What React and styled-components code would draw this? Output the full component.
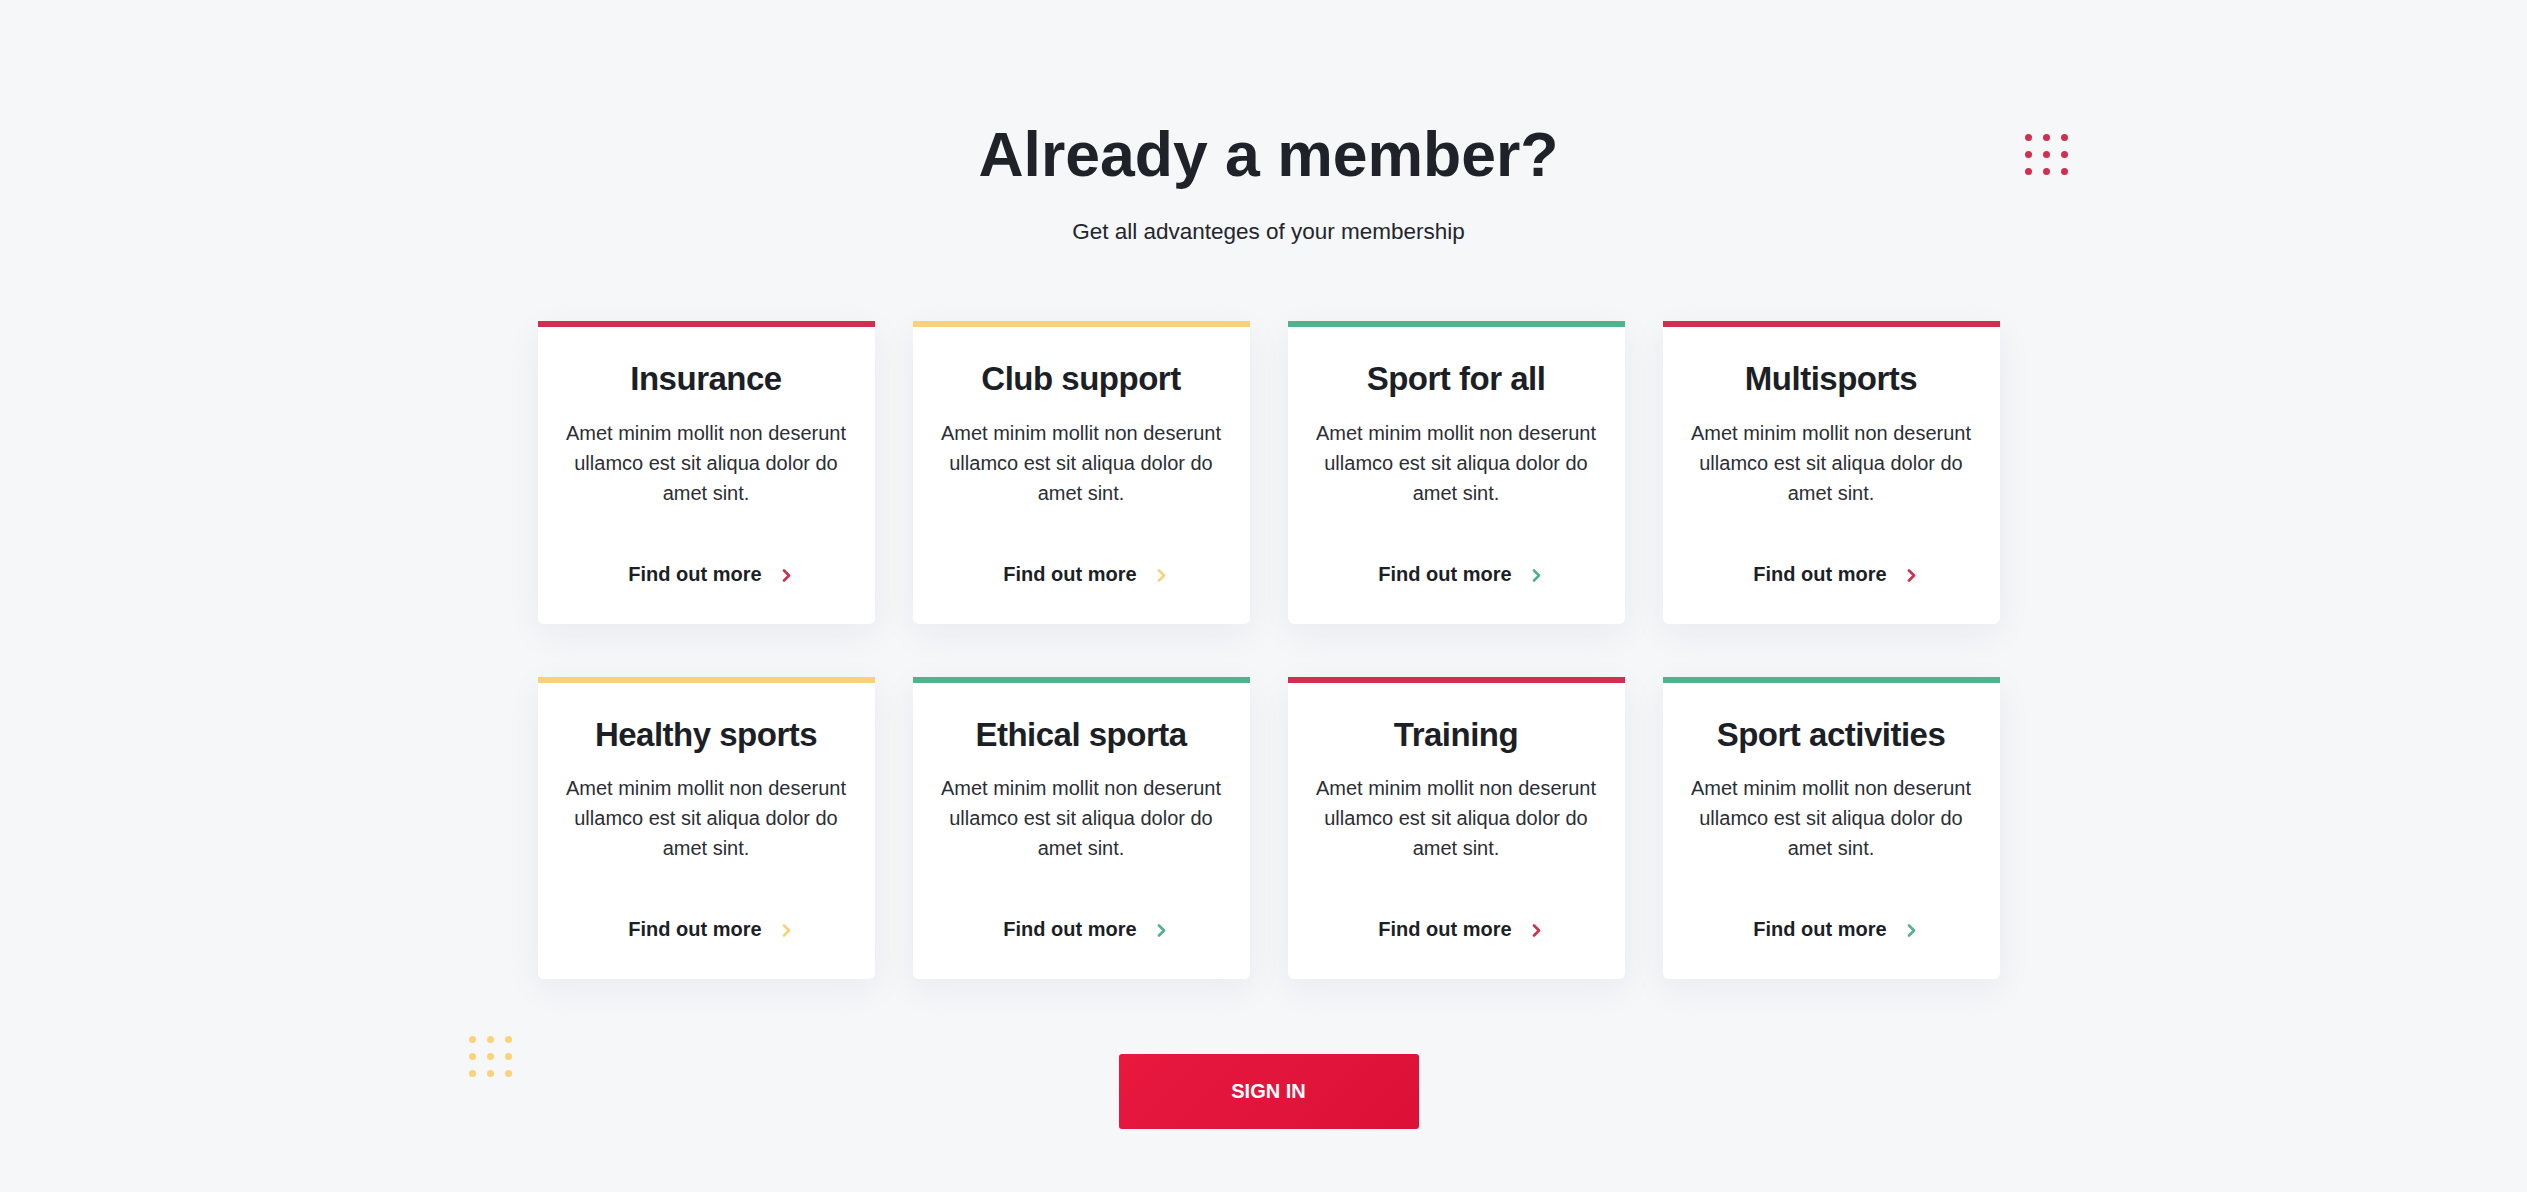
import React from 'react';
import styled, { createGlobalStyle } from 'styled-components';

const GlobalStyle = createGlobalStyle`
  html, body {
    margin: 0;
    padding: 0;
    background: #f6f7f9;
  }
  body {
    font-family: 'Liberation Sans', Arial, sans-serif;
    color: #1e2128;
  }
`;

const ACCENTS = {
  red: '#d02f4f',
  yellow: '#f7d27a',
  green: '#50b38e',
};

const Page = styled.main`
  position: relative;
  min-height: 1192px;
  box-sizing: border-box;
  padding: 117px 0 0 10px;
  display: flex;
  flex-direction: column;
  align-items: center;
  overflow: hidden;
`;

const Title = styled.h1`
  margin: 0;
  font-size: 62.5px;
  line-height: 1.2;
  font-weight: 700;
  color: #1f2229;
`;

const Subtitle = styled.p`
  margin: 27px 0 0;
  font-size: 22.5px;
  line-height: normal;
  color: #23262c;
`;

const Grid = styled.div`
  margin-top: 76px;
  display: grid;
  grid-template-columns: repeat(4, 337px);
  column-gap: 38px;
  row-gap: 53px;
`;

const Card = styled.article`
  background: #fff;
  border-top: 6px solid ${(p) => ACCENTS[p.$accent]};
  border-radius: 0 0 6px 6px;
  box-shadow: 0 10px 36px rgba(30, 40, 60, 0.06);
  padding: 32px 20px 38px;
  text-align: center;
  display: flex;
  flex-direction: column;
  align-items: center;
`;

const CardTitle = styled.h3`
  margin: 0;
  font-size: 33px;
  line-height: 1.2;
  font-weight: 700;
  letter-spacing: -0.5px;
  color: #1c1f26;
`;

const CardText = styled.p`
  margin: 19px 0 55px;
  font-size: 20px;
  line-height: 30px;
  color: #2b2e34;
`;

const MoreLink = styled.a`
  display: inline-flex;
  align-items: center;
  gap: 20px;
  margin-left: 7px;
  font-size: 20px;
  line-height: 23px;
  font-weight: 700;
  color: #1c1f26;
  text-decoration: none;
  cursor: pointer;

  svg {
    margin-top: 2px;
    color: ${(p) => ACCENTS[p.$accent]};
  }
`;

const SignIn = styled.button`
  margin-top: 75px;
  width: 300px;
  height: 75px;
  border: none;
  border-radius: 3px;
  background: linear-gradient(135deg, #e8183f 0%, #dc1138 100%);
  color: #fff;
  font-family: 'Liberation Sans', Arial, sans-serif;
  font-size: 20px;
  font-weight: 700;
  cursor: pointer;
`;

const Dots = styled.div`
  position: absolute;
  top: ${(p) => p.$top}px;
  left: calc(50% + ${(p) => p.$x}px);
  display: grid;
  grid-template-columns: repeat(3, 7px);
  column-gap: 11px;
  row-gap: 10px;

  span {
    width: 7px;
    height: 7px;
    border-radius: 50%;
    background: ${(p) => p.$color};
  }
`;

const Chevron = () => (
  <svg width="9" height="13" viewBox="0 0 9 13" fill="none">
    <path d="M2 1.5 L7 6.5 L2 11.5" stroke="currentColor" strokeWidth="2.6" strokeLinecap="round" strokeLinejoin="round" />
  </svg>
);

const DotGrid = (props) => (
  <Dots {...props}>
    {Array.from({ length: 9 }).map((_, i) => (
      <span key={i} />
    ))}
  </Dots>
);

const cards = [
  { title: 'Insurance', accent: 'red' },
  { title: 'Club support', accent: 'yellow' },
  { title: 'Sport for all', accent: 'green' },
  { title: 'Multisports', accent: 'red' },
  { title: 'Healthy sports', accent: 'yellow' },
  { title: 'Ethical sporta', accent: 'green' },
  { title: 'Training', accent: 'red' },
  { title: 'Sport activities', accent: 'green' },
];

const App = () => {
  return (
    <>
      <GlobalStyle />
      <Page>
        <DotGrid $top={134} $x={761} $color="#d02f4f" />
        <DotGrid $top={1036} $x={-795} $color="#fbd27a" />

        <Title>Already a member?</Title>
        <Subtitle>Get all advanteges of your membership</Subtitle>

        <Grid>
          {cards.map((c) => (
            <Card key={c.title} $accent={c.accent}>
              <CardTitle>{c.title}</CardTitle>
              <CardText>
                Amet minim mollit non deserunt
                <br />
                ullamco est sit aliqua dolor do
                <br />
                amet sint.
              </CardText>
              <MoreLink $accent={c.accent}>
                Find out more <Chevron />
              </MoreLink>
            </Card>
          ))}
        </Grid>

        <SignIn>SIGN IN</SignIn>
      </Page>
    </>
  );
};

export default App;
